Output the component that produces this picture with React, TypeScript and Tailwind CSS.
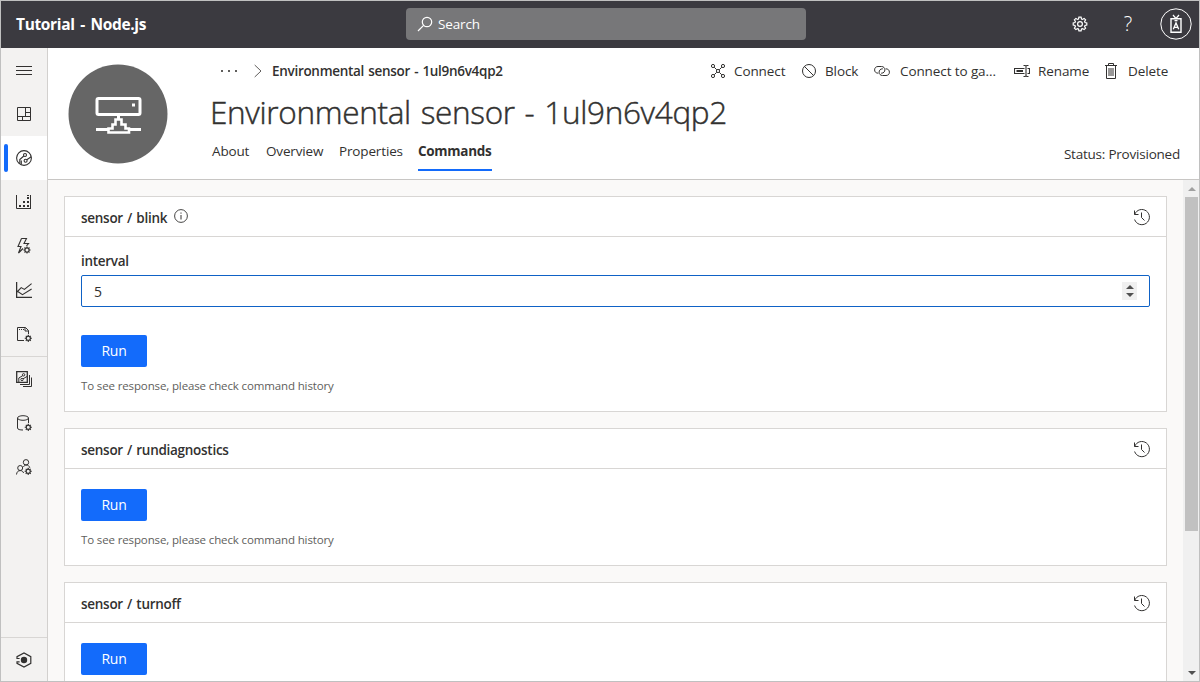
import type { ReactNode } from "react";

type IconProps = { className?: string; children: ReactNode; box?: number; w?: string };

function Icon({ className = "size-4", children, box = 16, w = "1" }: IconProps) {
  return (
    <svg
      viewBox={`0 0 ${box} ${box}`}
      className={`shrink-0 ${className}`}
      fill="none"
      stroke="currentColor"
      strokeWidth={w}
    >
      {children}
    </svg>
  );
}

function SmallGear({ x, y }: { x: number; y: number }) {
  return (
    <g transform={`translate(${x} ${y})`}>
      <circle r="2.1" strokeWidth="1.2" />
      <path d="M0-3.6V-2M0 2V3.6M-3.6 0H-2M2 0H3.6M-2.5-2.5L-1.4-1.4M1.4 1.4L2.5 2.5M-2.5 2.5L-1.4 1.4M1.4-1.4L2.5-2.5" strokeWidth="1.1" />
    </g>
  );
}

const MenuIcon = () => (
  <Icon>
    <path d="M0 4.5H16M0 8.5H16M0 12.5H16" />
  </Icon>
);

const DashboardIcon = () => (
  <Icon>
    <path d="M1.5 1.5H14.5V14.5H1.5ZM9.5 1.5V10M1.5 10.5H14.5M9.5 6.5H14.5M6.5 10.5V14.5" />
  </Icon>
);

const DevicesIcon = () => (
  <Icon w="1.1">
    <circle cx="8" cy="8" r="7.4" />
    <circle cx="9" cy="5" r="1.5" />
    <circle cx="9.6" cy="10.8" r="1.5" />
    <path d="M3.8 13.5V9.5L7.8 6M5.3 14.6V10.5M10.8 9.8L15.2 6.8" />
  </Icon>
);

const ScatterIcon = () => (
  <Icon>
    <path d="M.5 1V14.5H15M14.5 1V14.5" />
    <g fill="currentColor" stroke="none">
      <path d="M3 11h2v2H3zM7 11h2v2H7zM11 11h2v2h-2zM7 7h2v2H7zM11 7h2v2h-2zM11 3h2v2h-2zM11 1h2v1h-2z" />
    </g>
  </Icon>
);

const RulesIcon = () => (
  <Icon w="1.1">
    <path d="M5.5.5H10.5L8 5.5H12.5L10.5 7.8M5.5.5L2 8.5H5L2.5 15L7 10.5" />
    <SmallGear x={11} y={12} />
  </Icon>
);

const AnalyticsIcon = () => (
  <Icon w="1.1">
    <path d="M.6 0V15.3H16" strokeWidth="1.3" />
    <path d="M1 10L5.2 5.6L8.4 7.4L15.6 1.6M1 9L6.5 12.6L15.6 7" />
  </Icon>
);

const JobsIcon = () => (
  <Icon>
    <path d="M8 14.5H1.5V1.5H9.5L12.5 4.5V8M9 1.5V5H12.5" />
    <path d="M3 3.5H8" strokeDasharray="1 1" />
    <SmallGear x={12.3} y={12.3} />
  </Icon>
);

const TemplatesIcon = () => (
  <Icon>
    <path d="M.7.7H11.3V11.3H.7Z" strokeWidth="1.3" />
    <circle cx="7.6" cy="3.8" r="1.2" />
    <circle cx="6" cy="8.5" r="1.2" />
    <path d="M2.8 11V7L6.8 4.6M7 7.8L11 5.5M13.5 4V13.5H4M15.5 6.5V15.5H7" />
  </Icon>
);

const DataIcon = () => (
  <Icon>
    <ellipse cx="7" cy="3" rx="5.5" ry="2.3" />
    <path d="M1.5 3V13C1.5 14.5 4 15 7 15M12.5 3V8" />
    <SmallGear x={12.3} y={12.3} />
  </Icon>
);

const PeopleIcon = () => (
  <Icon>
    <circle cx="10" cy="3.3" r="2.7" />
    <circle cx="4.2" cy="9" r="2.5" />
    <path d="M.5 15.5C.8 12.8 2.2 11.6 4.2 11.6S7 12.5 7.6 14M7.5 8C8 6.7 9 6 10 6C12 6 13.4 7 13.8 8.8" />
    <SmallGear x={12.2} y={12.3} />
  </Icon>
);

const HexIcon = () => (
  <Icon w="1.2">
    <path d="M1 7V4.6L8 1L14.8 4.6V11.4L8 15L1 11.4V9.8H3.6M1 6.5H3.6" />
    <circle cx="8" cy="8" r="3.2" fill="currentColor" stroke="none" />
  </Icon>
);

const SettingsIcon = () => (
  <Icon w="1.2">
    <path d="M6.9 1.2H9.1L9.5 3L10.5 3.4L12.1 2.4L13.6 3.9L12.6 5.5L13 6.5L14.8 6.9V9.1L13 9.5L12.6 10.5L13.6 12.1L12.1 13.6L10.5 12.6L9.5 13L9.1 14.8H6.9L6.5 13L5.5 12.6L3.9 13.6L2.4 12.1L3.4 10.5L3 9.5L1.2 9.1V6.9L3 6.5L3.4 5.5L2.4 3.9L3.9 2.4L5.5 3.4L6.5 3Z" />
    <circle cx="8" cy="8" r="2.4" />
  </Icon>
);

const BadgeIcon = () => (
  <svg viewBox="0 0 32 32" className="size-8 shrink-0" fill="none" stroke="currentColor">
    <circle cx="16" cy="16" r="15.2" />
    <path d="M11 10.7H21V24.3H11Z" strokeWidth="1.4" />
    <path d="M13 7L16 10.5L19 7M14.5 12.7H17.5" strokeWidth="1.2" />
    <path d="M13.3 21.3L16 15L18.7 21.3M14.2 19.3H17.8" strokeWidth="1.3" />
  </svg>
);

const SearchIcon = () => (
  <Icon w="1.2">
    <circle cx="10" cy="6" r="4.7" />
    <path d="M6.6 9.4L1 15" />
  </Icon>
);

const ConnectIcon = () => (
  <Icon>
    <circle cx="3" cy="3" r="1.6" />
    <circle cx="13" cy="3" r="1.6" />
    <circle cx="3" cy="13" r="1.6" />
    <circle cx="13" cy="13" r="1.6" />
    <circle cx="8" cy="8" r="1.6" />
    <path d="M4.2 4.2L6.8 6.8M11.8 4.2L9.2 6.8M4.2 11.8L6.8 9.2M11.8 11.8L9.2 9.2" />
  </Icon>
);

const BlockIcon = () => (
  <Icon>
    <circle cx="8" cy="8" r="6.5" />
    <path d="M3.4 3.4L12.6 12.6" />
  </Icon>
);

const LinkIcon = () => (
  <Icon>
    <path d="M4.3 10.2C2 10.2.6 8.9.6 6.9S2 3.5 4 3.5H7.5C9.6 3.5 10.9 5 10.9 6.8S9.6 10.2 7.6 10.2H7" />
    <path d="M11.7 5.8C14 5.8 15.4 7.1 15.4 9.2S14 12.5 12 12.5H8.5C6.4 12.5 5.1 11 5.1 9.2S6.4 5.8 8.4 5.8H9" />
  </Icon>
);

const RenameIcon = () => (
  <Icon w="1.1">
    <path d="M10.5 5.5H.5V10.5H10.5M13.5 5.5H15.5V10.5H13.5M9.5 2.5H11L12 3L13 2.5H14.5M9.5 13.5H11L12 13L13 13.5H14.5M12 3V13" />
    <path d="M2.5 8H9" strokeWidth="2" />
  </Icon>
);

const DeleteIcon = () => (
  <Icon>
    <path d="M2 2.5H14M5.5 2.5V.5H10.5V2.5M3.5 2.5V15.5H12.5V2.5M6 5V13M8 5V13M10 5V13" />
  </Icon>
);

const HistoryIcon = () => (
  <Icon className="size-[18px]" box={18}>
    <path d="M1.7 6.4A7.6 7.6 0 1 1 1.6 11.5" />
    <path d="M1.5 2.5V6.5H5.5M8.5 4.5V9.5L11.5 12.5" />
  </Icon>
);

const InfoIcon = () => (
  <Icon className="size-3.5" box={14}>
    <circle cx="7" cy="7" r="6.4" strokeWidth=".9" />
    <path d="M7 6V10.5M7 3.5V4.7" />
  </Icon>
);

const DeviceAvatar = () => (
  <svg viewBox="0 0 100 100" className="size-[100px] shrink-0" fill="none">
    <circle cx="50" cy="50" r="49.5" fill="#666666" />
    <g stroke="#ffffff" strokeWidth="3">
      <rect x="29" y="34.5" width="43" height="16" rx="1.5" />
      <path d="M50.5 51V56M28 65.5H40M61 65.5H73" />
      <path d="M47.5 55.5H53.5V60.5H57.5V64.5H61V68.5H40.5V64.5H44.5V60.5H47.5Z" strokeWidth="2.6" />
    </g>
    <rect x="64" y="39.5" width="3" height="3" fill="#ffffff" />
  </svg>
);

function RailItem({ children, active = false }: { children: ReactNode; active?: boolean }) {
  return (
    <div className={`relative flex h-11 shrink-0 items-center justify-center ${active ? "bg-white" : ""}`}>
      {active && <span className="absolute top-2 left-[3px] h-7 w-1 rounded-sm bg-[#136bfb]" />}
      {children}
    </div>
  );
}

function Rail() {
  return (
    <nav className="flex w-[47px] shrink-0 flex-col border-r border-[#d2d0ce] bg-[#f3f2f1] text-[#323130]">
      <RailItem><MenuIcon /></RailItem>
      <RailItem><DashboardIcon /></RailItem>
      <RailItem active><DevicesIcon /></RailItem>
      <RailItem><ScatterIcon /></RailItem>
      <RailItem><RulesIcon /></RailItem>
      <RailItem><AnalyticsIcon /></RailItem>
      <RailItem><JobsIcon /></RailItem>
      <div className="h-px bg-[#d8d6d4]" />
      <RailItem><TemplatesIcon /></RailItem>
      <RailItem><DataIcon /></RailItem>
      <RailItem><PeopleIcon /></RailItem>
      <div className="mt-auto flex h-[44px] shrink-0 items-center justify-center border-t border-[#d8d6d4] pt-px">
        <HexIcon />
      </div>
    </nav>
  );
}

function TopBar() {
  return (
    <header className="flex h-[47px] shrink-0 items-center bg-[#3b3a40] text-white">
      <div className="w-[405px] pl-[15px] text-[15.5px] font-bold tracking-[-0.35px] [word-spacing:2px]">
        Tutorial - Node.js
      </div>
      <div className="-mt-px flex h-8 w-[400px] items-center gap-1 rounded-sm bg-[#777779] pl-[11px]">
        <SearchIcon />
        <span className="ml-px text-[13.5px] tracking-[-0.15px]">Search</span>
      </div>
      <div className="-mt-px ml-auto flex items-center pr-[7px]">
        <SettingsIcon />
        <span className="mr-[26px] ml-[34px] w-3 text-center text-[20px] leading-none font-light">?</span>
        <BadgeIcon />
      </div>
    </header>
  );
}

function Action({ icon, label, className }: { icon: ReactNode; label: string; className: string }) {
  return (
    <button className={`flex items-center whitespace-nowrap ${className}`}>
      {icon}
      <span className="text-[13.5px] tracking-[-0.1px]">{label}</span>
    </button>
  );
}

function PageHeader() {
  return (
    <section className="flex h-[132px] shrink-0 border-b border-[#c8c6c4] bg-white text-[#323130]">
      <div className="pt-4 pl-5">
        <DeviceAvatar />
      </div>
      <div className="flex grow flex-col pl-[43px]">
        <div className="mt-[11px] flex h-6 items-center">
          <span className="flex w-[43px] gap-[5px] pl-[10px]">
            <i className="size-0.5 bg-[#605e5c]" />
            <i className="size-0.5 bg-[#605e5c]" />
            <i className="size-0.5 bg-[#605e5c]" />
          </span>
          <svg viewBox="0 0 8 14" className="h-3.5 w-2 shrink-0" fill="none" stroke="#605e5c">
            <path d="M.7 1L7 7L.7 13" />
          </svg>
          <span className="ml-[10px] w-[300px] text-[13.5px] font-semibold tracking-[-0.3px] whitespace-nowrap [word-spacing:1px]">
            Environmental sensor - 1ul9n6v4qp2
          </span>
          <div className="ml-auto flex items-center pr-[13px]">
            <Action className="w-[91px] gap-2" icon={<ConnectIcon />} label="Connect" />
            <Action className="w-[73px] gap-2" icon={<BlockIcon />} label="Block" />
            <Action className="w-[140px] gap-2.5" icon={<LinkIcon />} label="Connect to ga..." />
            <Action className="w-[89px] gap-2" icon={<RenameIcon />} label="Rename" />
            <Action className="w-[83px] gap-[9px]" icon={<DeleteIcon />} label="Delete" />
          </div>
        </div>
        <h1 className="mt-2 -ml-px h-[42px] text-[31.5px] leading-[42px] font-light tracking-[-0.32px] whitespace-nowrap [word-spacing:2px] [-webkit-text-stroke:0.45px_#323130]">
          Environmental sensor - 1ul9n6v4qp2
        </h1>
        <div className="mt-1.5 flex items-start text-[13.5px] leading-6 tracking-[-0.15px]">
          <span className="w-[54px] pl-px">About</span>
          <span className="w-[73px] pl-px">Overview</span>
          <span className="w-[80px] pl-px">Properties</span>
          <span className="h-8 w-[74px] border-b-2 border-[#136bfb] font-bold tracking-[-0.3px]">Commands</span>
          <span className="mt-[3px] mr-[19px] ml-auto tracking-[-0.22px]">Status: Provisioned</span>
        </div>
      </div>
    </section>
  );
}

function RunButton() {
  return (
    <button className="flex h-8 w-[66px] items-center justify-center rounded-[2px] bg-[#136bfb] pb-px text-[14px] tracking-[-0.2px] text-white">
      Run
    </button>
  );
}

type CardProps = {
  title: string;
  info?: boolean;
  field?: { label: string; value: string };
  note?: string;
};

function CommandCard({ title, info = false, field, note }: CardProps) {
  return (
    <article className="shrink-0 border border-[#d8d6d4] bg-white text-[#323130]">
      <div className="flex h-10 items-center border-b border-[#d8d6d4] pr-[15px] pl-4">
        <h2 className="mt-1 text-[13.5px] font-semibold tracking-[-0.28px] [word-spacing:1px]">{title}</h2>
        {info && <span className="mb-0.5 ml-[7px]"><InfoIcon /></span>}
        <span className="ml-auto"><HistoryIcon /></span>
      </div>
      <div className="px-4 pb-[17px]">
        {field && (
          <label className="block pt-[14px]">
            <span className="block h-6 text-[13.5px] leading-5 font-semibold tracking-[-0.3px]">{field.label}</span>
            <span className="flex h-8 items-center justify-between rounded-[2px] border border-[#0f62c6] pr-3 pl-3 text-[14px]">
              {field.value}
              <span className="flex h-[18px] w-[15px] flex-col items-center justify-between bg-[#f0f0f0] py-[3px] text-[#505050]">
                <svg viewBox="0 0 8 4" className="h-1 w-2" fill="currentColor"><path d="M4 0L8 4H0Z" /></svg>
                <svg viewBox="0 0 8 4" className="h-1 w-2" fill="currentColor"><path d="M0 0H8L4 4Z" /></svg>
              </span>
            </span>
          </label>
        )}
        <div className={field ? "pt-7" : "pt-5"}>
          <RunButton />
        </div>
        {note && <p className="mt-[10px] text-[11.5px] leading-[17px] tracking-[-0.13px] text-[#605e5c]">{note}</p>}
      </div>
    </article>
  );
}

function ScrollBar() {
  return (
    <div className="flex w-4 shrink-0 flex-col items-center bg-[#f0f0f0] pl-px">
      <svg viewBox="0 0 8 4" className="mt-[7px] h-1 w-2 shrink-0" fill="#a0a0a0"><path d="M4 0L8 4H0Z" /></svg>
      <div className="mt-1.5 h-[334px] w-[13px] shrink-0 bg-[#c1c1c1]" />
      <svg viewBox="0 0 8 4" className="mt-auto mb-1.5 h-1 w-2 shrink-0" fill="#505050"><path d="M0 0H8L4 4Z" /></svg>
    </div>
  );
}

const HISTORY_NOTE = "To see response, please check command history";

export default function App() {
  return (
    <div className="flex h-[682px] w-[1200px] flex-col overflow-hidden border border-[#c0c0c0] font-['Open_Sans','Noto_Sans',sans-serif]">
      <TopBar />
      <div className="flex min-h-0 grow">
        <Rail />
        <main className="flex min-w-0 grow flex-col">
          <PageHeader />
          <div className="flex min-h-0 grow bg-[#faf9f8]">
            <div className="flex min-w-0 grow flex-col gap-4 overflow-hidden px-4 pt-4">
              <CommandCard title="sensor / blink" info field={{ label: "interval", value: "5" }} note={HISTORY_NOTE} />
              <CommandCard title="sensor / rundiagnostics" note={HISTORY_NOTE} />
              <CommandCard title="sensor / turnoff" />
            </div>
            <ScrollBar />
          </div>
        </main>
      </div>
    </div>
  );
}
